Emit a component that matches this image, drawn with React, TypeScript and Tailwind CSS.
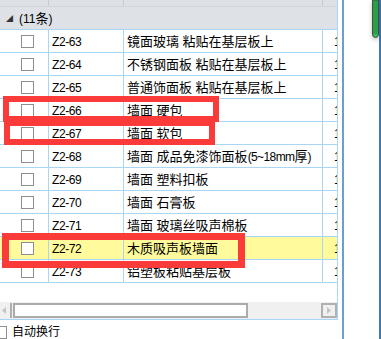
import React from "react";

const rows: [string, React.ReactNode, boolean][] = [
  ["Z2-63", "镜面玻璃 粘贴在基层板上", false],
  ["Z2-64", "不锈钢面板 粘贴在基层板上", false],
  ["Z2-65", "普通饰面板 粘贴在基层板上", false],
  ["Z2-66", "墙面 硬包", false],
  ["Z2-67", "墙面 软包", false],
  [
    "Z2-68",
    <>
      墙面 成品免漆饰面板
      <span className="text-[12px] tracking-[-0.6px]">(5~18mm</span>厚
      <span className="text-[12px]">)</span>
    </>,
    false,
  ],
  ["Z2-69", "墙面 塑料扣板", false],
  ["Z2-70", "墙面 石膏板", false],
  ["Z2-71", "墙面 玻璃丝吸声棉板", false],
  ["Z2-72", "木质吸声板墙面", true],
  ["Z2-73", "铝塑板粘贴基层板", false],
];

const font = { fontFamily: '"Liberation Sans", "Noto Sans CJK SC", sans-serif' };

function Box() {
  return <div className="w-[13px] h-[13px] border border-[#8e8e8e] bg-white" />;
}

export default function App() {
  return (
    <div
      className="w-[381px] h-[339px] overflow-hidden bg-white relative flex text-black"
      style={font}
    >
      <div className="w-[338px] flex flex-col shrink-0">
        <div className="h-[321px] border-r border-b border-[#a9d6f5] flex flex-col overflow-hidden">
          {/* header */}
          <div className="mt-[-16px] h-[23px] shrink-0 flex bg-[#dde1e6] border-b border-[#cfd6de] text-[12px] text-[#222]">
            <div className="w-[49px] border-r border-[#c3ccd6] flex items-center justify-center">选择</div>
            <div className="w-[75px] border-r border-[#c3ccd6] flex items-center justify-center">编号</div>
            <div className="w-[199px] border-r border-[#c3ccd6] flex items-center justify-center">名称</div>
            <div className="flex-1" />
          </div>
          {/* group row */}
          <div className="h-[23px] shrink-0 flex items-center bg-[#dee2e7] border-b border-[#a9d6f5] text-[13px] pt-[1px]">
            <span className="ml-[6px] text-[7px] text-[#333] w-[13px] leading-none">◢</span>
            <span>
              <span className="text-[12px]">(11</span>条<span className="text-[12px]">)</span>
            </span>
          </div>
          {rows.map(([code, name, hl]) => (
            <div
              key={code}
              className={`h-[23px] shrink-0 flex border-b border-[#a9d6f5] ${hl ? "bg-[#fffb9c]" : "bg-white"}`}
            >
              <div className="w-[49px] border-r border-[#a9d6f5] flex items-center pl-[21px]">
                <Box />
              </div>
              <div className="w-[75px] border-r border-[#a9d6f5] flex items-center pl-[3px] pt-[2px] text-[12px] tracking-[-0.4px]">
                {code}
              </div>
              <div className="w-[199px] border-r border-[#a9d6f5] flex items-center pl-[3px] pt-[2px] text-[13px] whitespace-nowrap overflow-hidden">
                <span>{name}</span>
              </div>
              <div className="flex-1 flex items-center pl-[11px] pt-[2px] text-[12px] overflow-hidden">1</div>
            </div>
          ))}
          <div className="flex-1" />
          {/* horizontal scrollbar */}
          <div className="h-[17px] shrink-0 flex bg-[#f0f0f0] pt-[1px] pb-[1px]">
            <div className="w-[12px] border-r-2 border-[#b0b0b0] flex items-center justify-start pl-[2px]">
              <svg width="4" height="7" viewBox="0 0 4 7">
                <path d="M4 0 L0 3.5 L4 7 Z" fill="#c4c4c4" />
              </svg>
            </div>
            <div className="w-[235px] ml-[1px] border-2 border-[#ababab] bg-white" />
            <div className="flex-1" />
            <div className="w-[16px] border-2 border-[#b0b0b0] flex items-center justify-center">
              <svg width="4" height="7" viewBox="0 0 4 7">
                <path d="M0 0 L4 3.5 L0 7 Z" fill="#c4c4c4" />
              </svg>
            </div>
          </div>
        </div>
        {/* footer */}
        <div className="flex items-center h-[18px] mt-[1px]">
          <div className="w-[13px] h-[13px] border border-[#8e8e8e] ml-[-6px] mt-[4px]" />
          <span className="ml-[5px] text-[12px] mt-[3px]">自动换行</span>
        </div>
      </div>
      <div className="w-[4px] shrink-0" />
      <div className="w-[2px] shrink-0 bg-[#6c9fd0]" />
      <div className="w-[28px] shrink-0" />
      <div className="w-[7px] shrink-0 flex flex-col">
        <svg width="7" height="38" viewBox="0 0 7 38" className="drop-shadow-[0_2px_2px_rgba(0,0,0,0.25)]">
          <path d="M0.5 0 V34 Q0.5 37.5 3.5 37.5 Q6.5 37.5 6.5 34 V0 Z" fill="#2fc04f" stroke="#4a4a4a" />
          {Array.from({ length: 17 }).map((_, i) => (
            <line key={i} x1="1" x2="6" y1={1 + i * 2} y2={1 + i * 2} stroke="#1e6e32" strokeWidth="0.8" />
          ))}
        </svg>
      </div>
      <div className="w-[3px] shrink-0 bg-[#3c78b5]" />

      {/* red annotation boxes */}
      <div className="absolute left-[3px] top-[96px] w-[216px] h-[26px] border-[6px] border-[#fb3a3a]" />
      <div className="absolute left-[4px] top-[120px] w-[211px] h-[25px] border-[6px] border-[#fb3a3a]" />
      <div className="absolute left-[2px] top-[233px] w-[243px] h-[35px] border-[7px] border-[#fb3a3a]" />
    </div>
  );
}
